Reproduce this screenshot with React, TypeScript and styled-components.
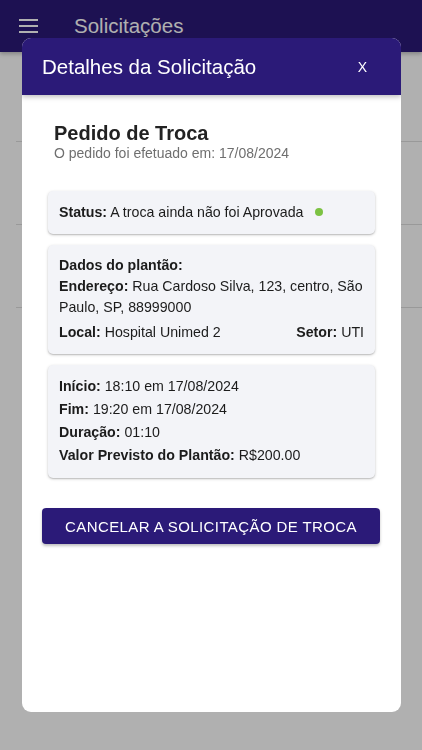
import React from 'react'
import styled, { createGlobalStyle } from 'styled-components'

const GlobalStyle = createGlobalStyle`
  html, body {
    margin: 0;
    padding: 0;
    background: #ffffff;
    font-family: "Liberation Sans", Arial, Helvetica, sans-serif;
  }
  * { box-sizing: border-box; }
`

const PURPLE = '#2b1a78'

const Page = styled.div`
  min-height: 750px;
  background: #ffffff;
`

const AppBar = styled.header`
  position: relative;
  z-index: 1;
  height: 52px;
  display: flex;
  align-items: center;
  padding-left: 19px;
  gap: 36px;
  background: ${PURPLE};
  box-shadow: 0 2px 4px rgba(0, 0, 0, 0.25);
  color: #ffffff;
`

const AppTitle = styled.h1`
  margin: 0;
  font-size: 20.5px;
  font-weight: 400;
  line-height: 24px;
`

const List = styled.ul`
  list-style: none;
  margin: 0;
  padding: 7px 0 0;
`

const ListItem = styled.li`
  height: 83px;
  margin-left: 16px;
  border-bottom: 1px solid #dedede;
`

const Overlay = styled.div`
  position: fixed;
  inset: 0;
  z-index: 10;
  display: flex;
  padding: 38px 21px 38px 22px;
  background: rgba(0, 0, 0, 0.31);
`

const Modal = styled.section`
  flex: 1;
  display: flex;
  flex-direction: column;
  background: #ffffff;
  border-radius: 9px;
  overflow: hidden;
`

const ModalHeader = styled.div`
  height: 57px;
  flex-shrink: 0;
  display: flex;
  align-items: center;
  justify-content: space-between;
  padding: 0 34px 0 20px;
  background: ${PURPLE};
  color: #ffffff;
  box-shadow: 0 2px 5px rgba(0, 0, 0, 0.25);
  position: relative;
`

const ModalTitle = styled.h2`
  margin: 0;
  font-size: 20.5px;
  font-weight: 400;
  line-height: 24px;
`

const CloseButton = styled.button`
  border: none;
  background: none;
  padding: 0;
  color: #ffffff;
  font-family: inherit;
  font-size: 14px;
  line-height: 16px;
  cursor: pointer;
`

const ModalBody = styled.div`
  padding: 27px 21px 0 20px;
  display: flex;
  flex-direction: column;
`

const Heading = styled.div`
  padding-left: 12px;
`

const HeadingTitle = styled.h3`
  margin: 0;
  font-size: 20px;
  font-weight: 700;
  line-height: 23px;
  color: #222222;
`

const HeadingSub = styled.p`
  margin: 0;
  font-size: 14px;
  line-height: 16px;
  color: #6f6f6f;
`

const Cards = styled.div`
  margin: 30px 5px 0 6px;
  display: flex;
  flex-direction: column;
  gap: 11px;
`

const Card = styled.div<{ $lh: number }>`
  background: #f3f4f8;
  border-radius: 5px;
  padding: 10px 8px 11px 11px;
  box-shadow: 0 1px 3px rgba(0, 0, 0, 0.22), 0 1px 1px rgba(0, 0, 0, 0.1);
  font-size: 14.2px;
  line-height: ${p => p.$lh}px;
  color: #1c1c1c;
`

const Row = styled.div`
  margin: 0;
`

const SplitRow = styled.div`
  margin-top: 4px;
  display: flex;
  justify-content: space-between;
  padding-right: 3px;
`

const Label = styled.b`
  font-weight: 700;
`

const StatusDot = styled.span`
  display: inline-block;
  width: 8px;
  height: 8px;
  margin-left: 11px;
  border-radius: 50%;
  background: #7cc243;
  vertical-align: 1px;
`

const CancelButton = styled.button`
  margin-top: 30px;
  height: 36px;
  border: none;
  border-radius: 4px;
  background: ${PURPLE};
  color: #ffffff;
  font-family: inherit;
  font-size: 15px;
  letter-spacing: 0.4px;
  text-transform: uppercase;
  box-shadow: 0 2px 3px rgba(0, 0, 0, 0.25);
  cursor: pointer;
`

const MenuIcon = () => (
  <svg width='19' height='14' viewBox='0 0 19 14'>
    <rect x='0' y='0' width='19' height='2' fill='#ffffff' />
    <rect x='0' y='6' width='19' height='2' fill='#ffffff' />
    <rect x='0' y='12' width='19' height='2' fill='#ffffff' />
  </svg>
)

const App: React.FC = () => {
  return (
    <Page>
      <GlobalStyle />
      <AppBar>
        <MenuIcon />
        <AppTitle>Solicitações</AppTitle>
      </AppBar>
      <List>
        {[1, 2, 3].map(i => <ListItem key={i} />)}
      </List>

      <Overlay>
        <Modal>
          <ModalHeader>
            <ModalTitle>Detalhes da Solicitação</ModalTitle>
            <CloseButton>X</CloseButton>
          </ModalHeader>
          <ModalBody>
            <Heading>
              <HeadingTitle>Pedido de Troca</HeadingTitle>
              <HeadingSub>O pedido foi efetuado em: 17/08/2024</HeadingSub>
            </Heading>

            <Cards>
              <Card $lh={22}>
                <Label>Status:</Label> A troca ainda não foi Aprovada
                <StatusDot />
              </Card>

              <Card $lh={21}>
                <Row><Label>Dados do plantão:</Label></Row>
                <Row>
                  <Label>Endereço:</Label> Rua Cardoso Silva, 123, centro, São Paulo, SP, 88999000
                </Row>
                <SplitRow>
                  <span><Label>Local:</Label> Hospital Unimed 2</span>
                  <span><Label>Setor:</Label> UTI</span>
                </SplitRow>
              </Card>

              <Card $lh={23}>
                <Row><Label>Início:</Label> 18:10 em 17/08/2024</Row>
                <Row><Label>Fim:</Label> 19:20 em 17/08/2024</Row>
                <Row><Label>Duração:</Label> 01:10</Row>
                <Row><Label>Valor Previsto do Plantão:</Label> R$200.00</Row>
              </Card>
            </Cards>

            <CancelButton>Cancelar a solicitação de troca</CancelButton>
          </ModalBody>
        </Modal>
      </Overlay>
    </Page>
  )
}

export default App
